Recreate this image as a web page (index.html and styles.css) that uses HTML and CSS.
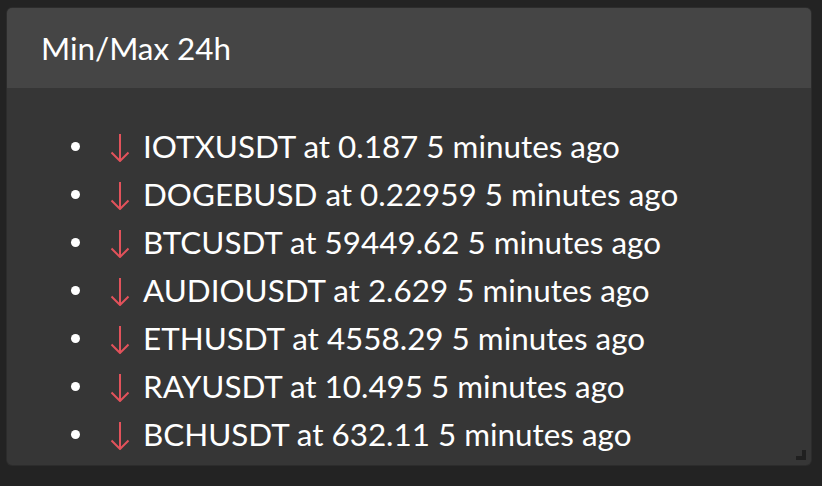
FILE: index.html
```html
<!DOCTYPE html>
<html lang="en">
<head>
  <meta charset="UTF-8" />
  <title>Min/Max 24h</title>
  <link rel="stylesheet" href="styles.css">
</head>
<body>
  <div class="panel">
    <div class="panel-header">Min/Max 24h</div>
    <div class="panel-body">
      <ul class="moves">
        <li><svg class="arrow" viewBox="0 0 20 28"><path d="M10 0V27M1.5 18.5L10 27L18.5 18.5"/></svg><span>IOTXUSDT at 0.187 5 minutes ago</span></li>
        <li><svg class="arrow" viewBox="0 0 20 28"><path d="M10 0V27M1.5 18.5L10 27L18.5 18.5"/></svg><span>DOGEBUSD at 0.22959 5 minutes ago</span></li>
        <li><svg class="arrow" viewBox="0 0 20 28"><path d="M10 0V27M1.5 18.5L10 27L18.5 18.5"/></svg><span>BTCUSDT at 59449.62 5 minutes ago</span></li>
        <li><svg class="arrow" viewBox="0 0 20 28"><path d="M10 0V27M1.5 18.5L10 27L18.5 18.5"/></svg><span>AUDIOUSDT at 2.629 5 minutes ago</span></li>
        <li><svg class="arrow" viewBox="0 0 20 28"><path d="M10 0V27M1.5 18.5L10 27L18.5 18.5"/></svg><span>ETHUSDT at 4558.29 5 minutes ago</span></li>
        <li><svg class="arrow" viewBox="0 0 20 28"><path d="M10 0V27M1.5 18.5L10 27L18.5 18.5"/></svg><span>RAYUSDT at 10.495 5 minutes ago</span></li>
        <li><svg class="arrow" viewBox="0 0 20 28"><path d="M10 0V27M1.5 18.5L10 27L18.5 18.5"/></svg><span>BCHUSDT at 632.11 5 minutes ago</span></li>
      </ul>
      <span class="resize-handle"></span>
    </div>
  </div>
</body>
</html>
```

FILE: styles.css
```css
:root {
  --page-bg: #232323;
  --header-bg: #454545;
  --body-bg: #363636;
  --text: #ffffff;
  --down: #e2525b;
  --font-family: 'Lato', 'Noto Sans', sans-serif;
}

html, body {
  margin: 0;
  height: 100%;
}

body {
  background-color: var(--page-bg);
  color: var(--text);
  font-family: var(--font-family);
  padding: 8px 11px 0 7px;
  box-sizing: border-box;
}

.panel {
  height: 457px;
  display: flex;
  flex-direction: column;
  border-radius: 5px;
  overflow: hidden;
  background-color: var(--body-bg);
  box-shadow: 0 0 0 1px #2c2c2c;
}

.panel-header {
  height: 80px;
  flex-shrink: 0;
  display: flex;
  align-items: center;
  padding-left: 34px;
  background-color: var(--header-bg);
  font-size: 31.4px;
  box-sizing: border-box;
}

.panel-body {
  flex: 1;
  position: relative;
}

.moves {
  list-style: none;
  margin: 34px 0 0;
  padding-left: 64px;
  font-size: 31.4px;
}

.moves li {
  display: flex;
  align-items: center;
  height: 48px;
}

.moves li::before {
  content: "";
  width: 9px;
  height: 9px;
  border-radius: 50%;
  background-color: var(--text);
  margin-right: 30px;
  flex-shrink: 0;
}

.arrow {
  width: 20px;
  height: 28px;
  margin: 4px 13px 0 0;
  flex-shrink: 0;
  fill: none;
  stroke: var(--down);
  stroke-width: 2;
}

.resize-handle {
  position: absolute;
  right: 5px;
  bottom: 5px;
  width: 10px;
  height: 10px;
  border-right: 4px solid #202020;
  border-bottom: 4px solid #202020;
  box-sizing: border-box;
}
```
